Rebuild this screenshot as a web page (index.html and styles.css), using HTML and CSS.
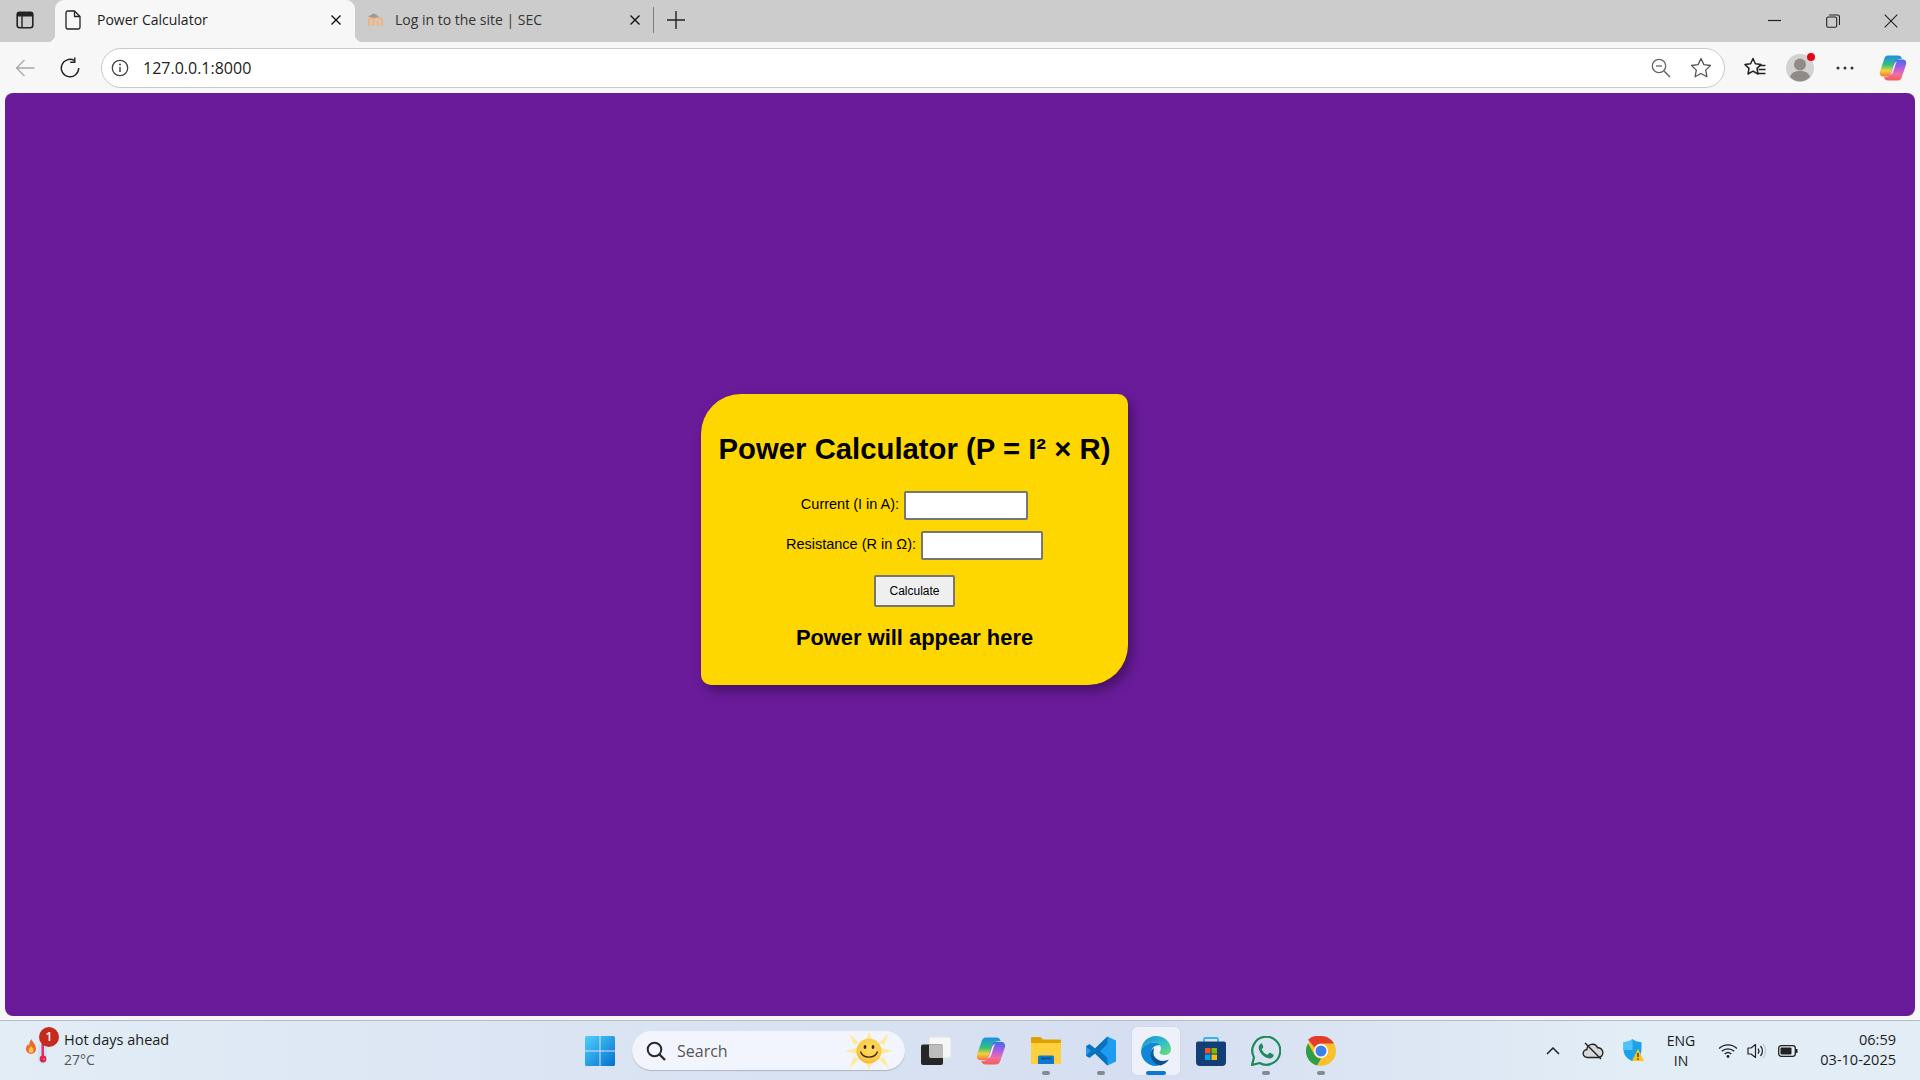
FILE: index.html
```html
<!DOCTYPE html>
<html lang="en">
<head>
    <meta charset="UTF-8">
    <meta name="viewport" content="width=device-width, initial-scale=1.0">
    <title>Power Calculator</title>
    <link rel="stylesheet" href="styles.css">
</head>
<body>
    <!-- shared copilot logo -->
    <svg class="defs" width="0" height="0">
      <defs>
        <linearGradient id="cpL" x1="0" y1="0" x2="0" y2="1"><stop offset="0" stop-color="#1f8fe8"/><stop offset=".45" stop-color="#35c07a"/><stop offset=".72" stop-color="#f2d23a"/><stop offset="1" stop-color="#f2743c"/></linearGradient>
        <linearGradient id="cpR" x1="0" y1="0" x2="0" y2="1"><stop offset="0" stop-color="#3a6fe8"/><stop offset=".35" stop-color="#a45ce6"/><stop offset=".7" stop-color="#f06ea8"/><stop offset="1" stop-color="#f3604a"/></linearGradient>
        <symbol id="copilot" viewBox="0 0 28 28">
          <path d="M9 1.500H19C21 1.500 22.500 2.500 23 5H21C18.500 5 17 6.500 16.500 8.500L13 19C12.500 21 11 22.500 9 22.500H4C1.500 22.500.2 20 1 17.500L5 5.500C5.700 3 7 1.500 9 1.500z" fill="url(#cpL)"/>
          <path d="M19 26.500H9C7 26.500 5.500 25.500 5 23H7C9.500 23 11 21.500 11.500 19.500L15 9C15.500 7 17 5.500 19 5.500H24C26.500 5.500 27.800 8 27 10.500L23 22.500C22.300 25 21 26.500 19 26.500z" fill="url(#cpR)"/>
          <path d="M18 7.500C16 8 15.300 9.500 14.800 11L12.500 18C12.200 19.200 11.500 20.300 10.500 21C12.500 20.700 13.800 19.300 14.300 17.500L16.500 10.500C16.800 9.500 17.200 8.500 18 7.500z" fill="#fff" opacity=".9"/>
        </symbol>
      </defs>
    </svg>

    <!-- browser tabs -->
    <div class="tabbar">
      <div class="side-btn">
        <svg width="18" height="18" viewBox="0 0 18 18"><rect x="1.2" y="1.2" width="15.6" height="15.6" rx="2.5" fill="none" stroke="#222" stroke-width="1.6"/><path d="M1.5 5.500V3.500a2 2 0 0 1 2-2h11a2 2 0 0 1 2 2v2z" fill="#222"/><path d="M6 5v11" stroke="#222" stroke-width="1.400"/></svg>
      </div>
      <div class="tab tab-active">
        <svg class="tab-icon" width="16" height="20" viewBox="0 0 16 20"><path d="M2.800 1h6.700L15 6.500v10.700a1.800 1.800 0 0 1-1.800 1.800H2.800A1.800 1.800 0 0 1 1 17.200V2.800A1.800 1.800 0 0 1 2.800 1z M9.500 1v5.500H15" fill="none" stroke="#222" stroke-width="1.300" stroke-linejoin="round"/></svg>
        <span class="tab-title">Power Calculator</span>
        <svg class="tab-close" width="12" height="12" viewBox="0 0 12 12"><path d="M1.500 1.500l9 9M10.500 1.500l-9 9" stroke="#111" stroke-width="1.400"/></svg>
      </div>
      <div class="tab">
        <svg class="tab-icon" width="18" height="16" viewBox="0 0 18 16"><path d="M2 14V8.500c0-1.700 1-2.500 2.300-2.500s2.200.8 2.200 2.500V14M6.500 14V8.500C6.500 6.800 7.500 6 9 6h3c1.800 0 3 1 3 2.800V14M10.700 14V9" fill="none" stroke="#f3b27c" stroke-width="2.200"/><path d="M1 4.500L7 1.500l5 3-5 1.500z" fill="#9a9a9a"/></svg>
        <span class="tab-title">Log in to the site | SEC</span>
        <svg class="tab-close" width="12" height="12" viewBox="0 0 12 12"><path d="M1.500 1.500l9 9M10.500 1.500l-9 9" stroke="#111" stroke-width="1.400"/></svg>
      </div>
      <div class="tab-sep"></div>
      <div class="new-tab">
        <svg width="18" height="18" viewBox="0 0 18 18"><path d="M9 0v18M0 9h18" stroke="#222" stroke-width="1.400"/></svg>
      </div>
      <div class="win-btns">
        <div class="win-btn"><svg width="14" height="14" viewBox="0 0 14 14"><path d="M0 6.500h13" stroke="#222" stroke-width="1.200"/></svg></div>
        <div class="win-btn"><svg width="14" height="14" viewBox="0 0 14 14"><rect x=".7" y="3" width="10" height="10.300" rx="1.500" fill="none" stroke="#222" stroke-width="1.100"/><path d="M3.200 1h8.300a2 2 0 0 1 2 2v8" fill="none" stroke="#222" stroke-width="1.100"/></svg></div>
        <div class="win-btn"><svg width="14" height="14" viewBox="0 0 14 14"><path d="M.7.700l12.600 12.600M13.300.700L.7 13.300" stroke="#222" stroke-width="1.100"/></svg></div>
      </div>
    </div>

    <!-- address bar -->
    <div class="toolbar">
      <div class="tool tool-back">
        <svg width="20" height="18" viewBox="0 0 20 18"><path d="M19.500 9H1.500M9.500 1L1.500 9l8 8" fill="none" stroke="#a9a9a9" stroke-width="1.300"/></svg>
      </div>
      <div class="tool tool-reload">
        <svg width="22" height="22" viewBox="0 0 22 22"><path d="M15.500 3.600A8.700 8.700 0 1 0 19.700 11" fill="none" stroke="#222" stroke-width="1.400"/><path d="M15.800 .6v4.600h-4.600" fill="none" stroke="#222" stroke-width="1.400"/></svg>
      </div>
      <div class="address">
        <div class="addr-info">
          <svg width="18" height="18" viewBox="0 0 18 18"><circle cx="9" cy="9" r="7.700" fill="none" stroke="#444" stroke-width="1.300"/><path d="M9 8v5" stroke="#444" stroke-width="1.500"/><circle cx="9" cy="5.500" r="1" fill="#444"/></svg>
        </div>
        <span class="addr-text">127.0.0.1:8000</span>
        <div class="addr-btn">
          <svg width="20" height="20" viewBox="0 0 20 20"><circle cx="8" cy="8" r="6.700" fill="none" stroke="#666" stroke-width="1.300"/><path d="M5 8h6" stroke="#666" stroke-width="1.300"/><path d="M13 13l6 6" stroke="#666" stroke-width="1.500"/></svg>
        </div>
        <div class="addr-btn">
          <svg width="22" height="21" viewBox="0 0 22 21"><path d="M11 1.500l2.900 6.100 6.600.9-4.800 4.600 1.200 6.600-5.900-3.200-5.900 3.200 1.200-6.600L1.500 8.500l6.600-.9z" fill="none" stroke="#555" stroke-width="1.300" stroke-linejoin="round"/></svg>
        </div>
      </div>
      <div class="tool tool-first">
        <svg width="22" height="22" viewBox="0 0 22 22"><path d="M9 1.500l2.400 5.300 5.600.8-4 3.800 1 5.600-5-2.800-5 2.800 1-5.600-4-3.800 5.600-.8z" fill="none" stroke="#222" stroke-width="1.500" stroke-linejoin="round"/><path d="M15 8.500h6.500M14.500 12.500h7M13.500 16.500h8" stroke="#222" stroke-width="1.300"/></svg>
      </div>
      <div class="tool profile">
        <svg width="28" height="28" viewBox="0 0 28 28"><circle cx="14" cy="14" r="14" fill="#d4d2d0"/><circle cx="14" cy="10.500" r="6" fill="#8f8b88"/><path d="M4 23c1.500-4.500 5-6 10-6s8.500 1.500 10 6a14 14 0 0 1-20 0z" fill="#8f8b88"/></svg>
        <span class="profile-dot"></span>
      </div>
      <div class="tool">
        <svg width="18" height="4" viewBox="0 0 18 4"><circle cx="2" cy="2" r="1.500" fill="#333"/><circle cx="9" cy="2" r="1.500" fill="#333"/><circle cx="16" cy="2" r="1.500" fill="#333"/></svg>
      </div>
      <div class="tool tool-copilot">
        <svg width="28" height="28"><use href="#copilot"/></svg>
      </div>
    </div>

    <!-- the page itself -->
    <main class="page">
      <div class="card">
        <h1>Power Calculator (P = I² × R)</h1>
        <div class="field">
          <label for="current">Current (I in A):</label>
          <input id="current" class="input-current" type="text">
        </div>
        <div class="field">
          <label for="resistance">Resistance (R in Ω):</label>
          <input id="resistance" class="input-resistance" type="text">
        </div>
        <button type="button">Calculate</button>
        <h2>Power will appear here</h2>
      </div>
    </main>

    <!-- windows taskbar -->
    <footer class="taskbar">
      <div class="weather">
        <div class="weather-icon">
          <svg width="30" height="34" viewBox="0 0 30 34"><path d="M7.500 3c.5 2.500 4.500 5 4.500 10a5 5 0 0 1-10 0c0-2.500 1-3.500 2-5 .3 1 .7 1.500 1.300 1.800C5 7 6 5 7.500 3z" fill="#ee6a2a"/><path d="M7 10c1.500 1.500 2.500 3 2.500 4.500a2.500 2.500 0 0 1-5 0c0-2 1.500-2.500 2.500-4.500z" fill="#fcc24f"/><rect x="14" y="6" width="9" height="22" rx="4.500" fill="#cfe4f8"/><rect x="17.500" y="8" width="2.500" height="14" fill="#e0335a"/><circle cx="19" cy="23" r="3.400" fill="#d9254f"/><circle cx="20" cy="23" r=".8" fill="#f5a5b5"/></svg>
          <span class="weather-badge">1</span>
        </div>
        <div class="weather-text">
          <span class="weather-title">Hot days ahead</span>
          <span class="weather-temp">27°C</span>
        </div>
      </div>

      <div class="task-slot">
        <svg width="30" height="30" viewBox="0 0 30 30"><defs><linearGradient id="win" x1="0" y1="0" x2="1" y2="1"><stop offset="0" stop-color="#4fd0fb"/><stop offset="1" stop-color="#0470cf"/></linearGradient></defs><path d="M1.500 0H14.500V14.500H0V1.500A1.500 1.500 0 0 1 1.500 0zM15.500 0H28.500A1.500 1.500 0 0 1 30 1.500V14.500H15.500zM0 15.500H14.500V30H1.500A1.500 1.500 0 0 1 0 28.500zM15.500 15.500H30V28.500A1.500 1.500 0 0 1 28.500 30H15.500z" fill="url(#win)"/></svg>
      </div>
      <div class="search">
        <svg width="20" height="20" viewBox="0 0 20 20"><circle cx="8.500" cy="8.500" r="6.800" fill="none" stroke="#2a2a2a" stroke-width="2"/><path d="M13.500 13.500l5.500 5.500" stroke="#2a2a2a" stroke-width="2.400"/></svg>
        <span class="search-text">Search</span>
        <svg class="search-sun" width="48" height="38" viewBox="0 0 48 38">
          <defs><radialGradient id="sun" cx=".55" cy=".4" r=".7"><stop offset="0" stop-color="#fedc62"/><stop offset=".7" stop-color="#fcc844"/><stop offset="1" stop-color="#ef9f2c"/></radialGradient></defs>
          <g fill="#fdeb9a">
            <path d="M21 7l3-7 3 7zM21 31l3 7 3-7zM12 16L0 19l12 3zM36 16l12 3-12 3z"/>
            <path d="M14 11L4 1l5 12zM34 11L44 1l-5 12zM14 27L4 37l5-12zM34 27L44 37l-5-12z"/>
          </g>
          <circle cx="24" cy="19" r="12.500" fill="url(#sun)"/>
          <ellipse cx="20" cy="15" rx="1.400" ry="2" fill="#3a2a10"/>
          <ellipse cx="28" cy="15" rx="1.400" ry="2" fill="#3a2a10"/>
          <path d="M15.500 19.500c2 7.500 15 7.500 17 0" fill="none" stroke="#3a2a10" stroke-width="1.300"/>
        </svg>
      </div>

      <div class="task-apps">
        <div class="task-slot">
          <svg width="30" height="28" viewBox="0 0 30 28"><rect x="8" y="0" width="22" height="21" rx="2" fill="#f6f6f6" stroke="#e2e2e2"/><rect x="0" y="7.500" width="22" height="20.500" rx="2" fill="#262626"/><path d="M8 7.500h14V21H10a2 2 0 0 1-2-2z" fill="#bdbdbd"/></svg>
        </div>
        <div class="task-slot">
          <svg width="30" height="30"><use href="#copilot"/></svg>
        </div>
        <div class="task-slot has-dot">
          <svg width="30" height="27" viewBox="0 0 30 27"><path d="M1 0h8.500l2.500 2.500h17a1 1 0 0 1 1 1V26a1 1 0 0 1-1 1H1a1 1 0 0 1-1-1V1a1 1 0 0 1 1-1z" fill="#e0a100"/><path d="M0 6h30v20a1 1 0 0 1-1 1H1a1 1 0 0 1-1-1z" fill="#fdd13e"/><path d="M7 27v-7a1.500 1.500 0 0 1 1.500-1.500h13A1.500 1.500 0 0 1 23 20v7z" fill="#0f78c8"/><path d="M10 21.500h10" stroke="#0b4f8f" stroke-width="1.500"/></svg>
        </div>
        <div class="task-slot has-dot">
          <svg width="30" height="30" viewBox="0 0 30 30"><path d="M21.500.5L30 4.500V25.500L21.500 29.500 9 17.500l-5.500 4.200L0 19.800V10.200l3.500-1.900L9 12.500z" fill="#1f9cf0"/><path d="M21.500.5V8L14 15l7.500 7v7.500L9 17.500l-5.500 4.200L0 19.800 5 15 0 10.200l3.500-1.900L9 12.500z" fill="#0a72bd"/></svg>
        </div>
        <div class="task-slot active-app">
          <svg width="30" height="30" viewBox="0 0 30 30"><defs><linearGradient id="edge1" x1="0" y1="0" x2="1" y2="1"><stop offset="0" stop-color="#0f8bd4"/><stop offset=".55" stop-color="#34c1c8"/><stop offset="1" stop-color="#74e06b"/></linearGradient><linearGradient id="edge2" x1="0" y1="0" x2="1" y2="1"><stop offset="0" stop-color="#0a5fa8"/><stop offset="1" stop-color="#0c4a86"/></linearGradient></defs><path d="M15 0c8.500 0 15 6 15 13.500 0 3.500-3 5.500-6.500 5.500-3 0-5-1-5-2.500 0-1.200 1.500-1.500 1.500-4C20 8.500 16.500 6.500 13 6.500 6 6.500 1 11 0 15 .5 6.500 6.500 0 15 0z" fill="url(#edge1)"/><path d="M0 15c1-4 6-8.500 13-8.500 3 0 5.500 1.200 6.500 3-3-1-7 .5-8.500 3.500-2 4.500 1 12 8 15.500C16.500 30 15.500 30 15 30 6.500 30 0 23 0 15z" fill="#0f86d8"/><path d="M13 12c-3 2-4.500 6-2.500 10.500 1.500 3.500 5 6.500 9 7 3.500-1 6.500-3 8.500-6-3 1.500-7.500 2-10.500.5-3-1.500-5.500-4.500-5-8 .2-1.500.5-3 .5-4z" fill="url(#edge2)"/></svg>
          <span class="active-bar"></span>
        </div>
        <div class="task-slot">
          <svg width="30" height="30" viewBox="0 0 30 30"><path d="M8 7V3.500A1.500 1.500 0 0 1 9.500 2h11A1.500 1.500 0 0 1 22 3.500V7" fill="none" stroke="#2fb7ee" stroke-width="1.800"/><path d="M2 5.500h26a2 2 0 0 1 2 2V26a4 4 0 0 1-4 4H4a4 4 0 0 1-4-4V7.500a2 2 0 0 1 2-2z" fill="#123f75"/><rect x="9" y="12" width="5.500" height="5.500" fill="#ef4f2b"/><rect x="15.500" y="12" width="5.500" height="5.500" fill="#7fba00"/><rect x="9" y="18.500" width="5.500" height="5.500" fill="#00a4ef"/><rect x="15.500" y="18.500" width="5.500" height="5.500" fill="#ffb900"/></svg>
        </div>
        <div class="task-slot has-dot">
          <svg width="30" height="30" viewBox="0 0 30 30"><path d="M1 29l2-7.500A14 14 0 1 1 8.500 27z" fill="none" stroke="#1d8a5a" stroke-width="2.200" stroke-linejoin="round"/><path d="M10.500 7.800c-.6 0-1.300.3-1.800 1-.8 1-1.200 2-1 3.500.3 2.500 2 5 4 7 2 1.800 4.500 3 6.700 3.200 1.600.1 3-.7 3.700-1.700.5-.7.6-1.500.5-2.100-1-.7-2.300-1.400-3.500-1.900-.5-.2-.9 0-1.200.4l-.9 1.200c-.3.300-.7.400-1.100.2-2.200-1-4-2.700-5-4.900-.2-.4-.1-.7.200-1l.9-1c.3-.4.4-.8.200-1.200-.4-1.100-.9-2.200-1.500-3.200-.2-.3-.5-.5-1-.5z" fill="#1d8a5a"/></svg>
        </div>
        <div class="task-slot has-dot">
          <svg width="30" height="30" viewBox="0 0 30 30"><circle cx="15" cy="15" r="15" fill="#fbc02d"/><path d="M15 0A15 15 0 0 1 28 7.500H15A7.500 7.500 0 0 0 8.500 11.300L2 3.800A15 15 0 0 1 15 0z" fill="#e33b2e"/><path d="M2 7.500L8.500 18.800A7.500 7.500 0 0 0 15 22.500L11 29.500A15 15 0 0 1 2 7.500z" fill="#2e9d4a"/><circle cx="15" cy="15" r="7" fill="#fff"/><circle cx="15" cy="15" r="5.500" fill="#3f7fe8"/></svg>
        </div>
      </div>

      <div class="tray">
        <div class="tray-slot tray-40"><svg width="14" height="8" viewBox="0 0 14 8"><path d="M1 7l6-6 6 6" fill="none" stroke="#222" stroke-width="1.500"/></svg></div>
        <div class="tray-slot tray-40"><svg width="22" height="20" viewBox="0 0 22 20"><path d="M5.500 16.500a4 4 0 0 1-.6-8A5.500 5.500 0 0 1 15.500 6.800a4.800 4.800 0 0 1 1 9.700z" fill="#d8d8d8" stroke="#222" stroke-width="1.400"/><path d="M3 2l16 16" stroke="#222" stroke-width="1.400"/></svg></div>
        <div class="tray-slot tray-40">
          <svg width="21" height="23" viewBox="0 0 21 23"><path d="M9.500 0c2 1.800 5 3 9 3.200v7c0 5.500-3.500 9.800-9 12C4 20 .5 15.700.5 10.200v-7C4.500 3 7.500 1.800 9.500 0z" fill="#1da1e8"/><path d="M9.500 0v11H.5v-.8-7C4.500 3 7.500 1.800 9.500 0z" fill="#4fc3f7"/><path d="M15 10l6 12H9z" fill="#fcc419"/><path d="M15 14v4" stroke="#222" stroke-width="1.300"/><circle cx="15" cy="20" r=".8" fill="#222"/></svg>
        </div>
        <div class="tray-lang"><span>ENG</span><span>IN</span></div>
        <div class="tray-slot tray-wifi"><svg width="20" height="15" viewBox="0 0 20 15"><path d="M1 5.500a13 13 0 0 1 18 0M3.800 8.300a9 9 0 0 1 12.400 0M6.700 11a5 5 0 0 1 6.600 0" fill="none" stroke="#222" stroke-width="1.300"/><circle cx="10" cy="13.500" r="1.400" fill="#222"/></svg></div>
        <div class="tray-slot tray-vol"><svg width="20" height="16" viewBox="0 0 20 16"><path d="M1 5h3l4.500-3.500v13L4 11H1z" fill="none" stroke="#222" stroke-width="1.200" stroke-linejoin="round"/><path d="M11 5.500a4 4 0 0 1 0 5" fill="none" stroke="#222" stroke-width="1.200"/><path d="M13.500 3a7.500 7.500 0 0 1 0 10" fill="none" stroke="#222" stroke-width="1.200"/><path d="M16 1a11 11 0 0 1 0 14" fill="none" stroke="#c4c7cc" stroke-width="1.200"/></svg></div>
        <div class="tray-slot tray-batt"><svg width="20" height="12" viewBox="0 0 20 12"><rect x=".7" y=".7" width="16.600" height="10.600" rx="2.500" fill="none" stroke="#222" stroke-width="1.300"/><rect x="2.500" y="2.500" width="11" height="7" rx="1" fill="#222"/><path d="M18.500 4v4" stroke="#222" stroke-width="2"/></svg></div>
        <div class="clock"><span>06:59</span><span>03-10-2025</span></div>
      </div>
    </footer>
</body>
</html>
```

FILE: styles.css
```css
* {
  box-sizing: border-box;
}
body {
  margin: 0;
  width: 1920px;
  height: 1080px;
  overflow: hidden;
  display: flex;
  flex-direction: column;
  background-color: #f7f7f7;
  font-family: "Open Sans", "Noto Sans", sans-serif;
  color: #1c1c1c;
}
svg {
  display: block;
  flex: none;
}
.defs {
  position: absolute;
}

/* tabs */
.tabbar {
  height: 42px;
  background-color: #cccccc;
  display: flex;
  align-items: center;
  flex: none;
}
.side-btn {
  width: 50px;
  height: 42px;
  display: flex;
  align-items: center;
  justify-content: center;
}
.side-btn svg {
  margin-top: -2px;
}
.tab {
  width: 297px;
  height: 42px;
  margin-left: 1px;
  padding: 0 12px 2px 11px;
  display: flex;
  align-items: center;
  font-size: 14px;
  color: #333;
}
.tab-active {
  position: relative;
  width: 300px;
  margin-left: 5px;
  padding: 0 13px 2px 10px;
  background-color: #f7f7f7;
  border-radius: 9px 9px 0 0;
  color: #1c1c1c;
}
.tab-active::before,
.tab-active::after {
  content: "";
  position: absolute;
  bottom: 0;
  width: 8px;
  height: 8px;
}
.tab-active::before {
  left: -8px;
  background: radial-gradient(circle at 0 0, #cccccc 8px, #f7f7f7 8.500px);
}
.tab-active::after {
  right: -8px;
  background: radial-gradient(circle at 100% 0, #cccccc 8px, #f7f7f7 8.500px);
}
.tab-icon {
  margin-right: 10px;
}
.tab-active .tab-icon {
  margin-right: 16px;
}
.tab-title {
  flex: 1;
  white-space: nowrap;
  margin-top: -2px;
}
.tab-sep {
  width: 1px;
  height: 26px;
  background-color: #7d7d7d;
  margin-top: -2px;
}
.new-tab {
  margin: -3px 0 0 13px;
}
.win-btns {
  margin-left: auto;
  display: flex;
}
.win-btn {
  width: 58px;
  height: 42px;
  display: flex;
  align-items: center;
  justify-content: center;
}

/* toolbar */
.toolbar {
  height: 51px;
  flex: none;
  display: flex;
  align-items: center;
}
.tool {
  position: relative;
  width: 45px;
  height: 40px;
  display: flex;
  align-items: center;
  justify-content: center;
}
.tool-back {
  width: 50px;
}
.tool-reload {
  width: 40px;
}
.tool-first {
  margin-left: 7.500px;
}
.tool-copilot {
  width: 51px;
}
.address {
  width: 1624px;
  height: 40px;
  margin-left: 11px;
  background-color: #fff;
  border: 1.500px solid #c9c9c9;
  border-radius: 20px;
  display: flex;
  align-items: center;
  padding-right: 3px;
}
.addr-info {
  width: 36px;
  padding-left: 9px;
}
.addr-text {
  flex: 1;
  padding-left: 5px;
  font-size: 16px;
  color: #222;
}
.addr-btn {
  width: 40px;
  display: flex;
  justify-content: center;
}
.profile-dot {
  position: absolute;
  top: 5px;
  left: 29px;
  width: 8px;
  height: 8px;
  border-radius: 50%;
  background-color: #e30613;
}

/* page */
.page {
  flex: none;
  height: 923px;
  margin: 0 5px;
  border-radius: 8px;
  background-color: #6a1b9a;
  padding: 301px 0 0 696px;
}
.card {
  width: 427px;
  height: 291px;
  padding: 19px 8px 0;
  background-color: #ffd700;
  border-radius: 40px 10px 40px 10px;
  box-shadow: 4px 6px 12px rgba(0, 0, 0, 0.35);
  font-family: "Liberation Sans", Arial, sans-serif;
  color: #000;
  text-align: center;
}
.card h1 {
  margin: 18px 0 24px;
  font-size: 29.300px;
  line-height: 36px;
  font-weight: bold;
}
.field {
  height: 29px;
  margin-bottom: 11px;
  display: flex;
  align-items: center;
  justify-content: center;
  font-size: 14.500px;
}
.field label {
  margin: -3px 5px 0 0;
}
.field input {
  height: 29px;
  border: 2px solid #767676;
  border-radius: 2px;
  background-color: #fff;
  padding: 0;
}
.input-current {
  width: 124px;
}
.input-resistance {
  width: 122px;
}
.card button {
  display: block;
  width: 81px;
  height: 32px;
  margin: 15px auto 0;
  padding: 0;
  border: 2px solid #767676;
  border-radius: 2px;
  background-color: #efefef;
  font-family: "Liberation Sans", Arial, sans-serif;
  font-size: 12px;
  color: #000;
}
.card h2 {
  margin: 18px 0 0;
  font-size: 21.900px;
  line-height: 26px;
  font-weight: bold;
}

/* taskbar */
.taskbar {
  margin-top: 4px;
  height: 60px;
  flex: none;
  border-top: 1px solid #b6bcc6;
  background: linear-gradient(90deg, #e2edf6 0%, #dbe4f3 30%, #d6dff1 60%, #e2edf6 85%);
  display: flex;
  align-items: center;
}
.weather {
  width: 572.500px;
  flex: none;
  display: flex;
  align-items: center;
  padding-left: 24px;
}
.weather-icon {
  position: relative;
  width: 30px;
  height: 34px;
  margin: 4px 10px 0 0;
}
.weather-badge {
  position: absolute;
  top: -9px;
  left: 15px;
  width: 20px;
  height: 20px;
  border-radius: 50%;
  background-color: #c42b1c;
  color: #fff;
  font-size: 12px;
  font-weight: 600;
  line-height: 20px;
  text-align: center;
}
.weather-text {
  display: flex;
  flex-direction: column;
  margin-top: -2px;
  font-size: 14.500px;
  line-height: 20px;
}
.weather-temp {
  color: #555;
  font-size: 14px;
}
.task-slot {
  position: relative;
  width: 55px;
  height: 48px;
  flex: none;
  display: flex;
  align-items: center;
  justify-content: center;
}
.has-dot::after {
  content: "";
  position: absolute;
  bottom: 0;
  left: 23.500px;
  width: 8px;
  height: 4px;
  border-radius: 2px;
  background-color: #858a90;
}
.active-app::before {
  content: "";
  position: absolute;
  left: 3.500px;
  top: 0;
  width: 48px;
  height: 48px;
  border-radius: 5px;
  background-color: #eef1f9;
  box-shadow: 0 0 1px rgba(0, 0, 0, 0.2);
}
.active-app svg {
  position: relative;
}
.active-bar {
  position: absolute;
  bottom: 0;
  left: 17.500px;
  width: 20px;
  height: 4px;
  border-radius: 2px;
  background-color: #0a78d4;
}
.search {
  width: 273px;
  height: 39px;
  flex: none;
  margin-left: 4.500px;
  padding-left: 14px;
  border-radius: 20px;
  background-color: #f2f5fd;
  box-shadow: 0 1px 1px rgba(0, 0, 0, 0.2);
  display: flex;
  align-items: center;
  overflow: hidden;
}
.search-text {
  flex: 1;
  margin-left: 11px;
  font-size: 16px;
  color: #555;
}
.search-sun {
  margin-right: 12px;
}
.task-apps {
  display: flex;
  margin-left: 3px;
}
.tray {
  margin-left: auto;
  flex: none;
  display: flex;
  align-items: center;
  padding-right: 24px;
}
.tray-slot {
  display: flex;
  justify-content: center;
  align-items: center;
}
.tray-40 {
  width: 40px;
}
.tray-lang {
  width: 56px;
  display: flex;
  flex-direction: column;
  align-items: center;
  font-size: 14px;
  line-height: 20px;
}
.tray-wifi {
  width: 30px;
  margin-left: 4px;
}
.tray-vol {
  width: 28px;
}
.tray-batt {
  width: 34px;
}
.clock {
  width: 91px;
  display: flex;
  flex-direction: column;
  align-items: flex-end;
  margin-top: -2px;
  font-size: 14.500px;
  line-height: 20px;
}
```
